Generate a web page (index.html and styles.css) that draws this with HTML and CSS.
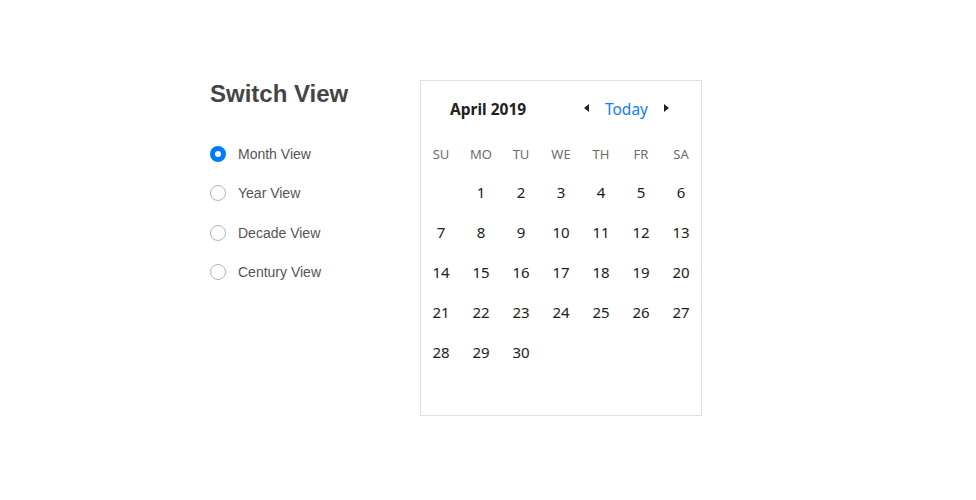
FILE: index.html
```html
<!DOCTYPE html>
<html>
<head>
<meta charset="utf-8">
<link rel="stylesheet" href="styles.css">
</head>
<body>
<div class="page">
  <div class="options">
    <h2 class="title">Switch View</h2>
    <div class="radios">
      <label class="radio-row"><span class="radio checked"></span><span class="radio-label">Month View</span></label>
      <label class="radio-row"><span class="radio"></span><span class="radio-label">Year View</span></label>
      <label class="radio-row"><span class="radio"></span><span class="radio-label">Decade View</span></label>
      <label class="radio-row"><span class="radio"></span><span class="radio-label">Century View</span></label>
    </div>
  </div>
  <div class="calendar">
    <div class="cal-header">
      <span class="cal-title">April 2019</span>
      <div class="cal-nav">
        <span class="arrow arrow-left"></span>
        <span class="today">Today</span>
        <span class="arrow arrow-right"></span>
      </div>
    </div>
    <div class="weekdays">
      <span>SU</span><span>MO</span><span>TU</span><span>WE</span><span>TH</span><span>FR</span><span>SA</span>
    </div>
    <div class="days">
      <span></span><span>1</span><span>2</span><span>3</span><span>4</span><span>5</span><span>6</span>
      <span>7</span><span>8</span><span>9</span><span>10</span><span>11</span><span>12</span><span>13</span>
      <span>14</span><span>15</span><span>16</span><span>17</span><span>18</span><span>19</span><span>20</span>
      <span>21</span><span>22</span><span>23</span><span>24</span><span>25</span><span>26</span><span>27</span>
      <span>28</span><span>29</span><span>30</span><span></span><span></span><span></span><span></span>
      <span></span><span></span><span></span><span></span><span></span><span></span><span></span>
    </div>
  </div>
</div>
</body>
</html>
```

FILE: styles.css
```css
html, body {
  margin: 0;
  padding: 0;
  background: #fff;
}
.page {
  display: flex;
  padding: 80px 0 0 210px;
}
.options {
  width: 210px;
  font-family: "Liberation Sans", Arial, sans-serif;
}
.title {
  margin: 0;
  font-size: 24px;
  line-height: 28px;
  font-weight: bold;
  color: #454545;
}
.radios {
  margin-top: 26px;
  display: flex;
  flex-direction: column;
}
.radio-row {
  display: flex;
  align-items: center;
  height: 39.5px;
}
.radio {
  box-sizing: border-box;
  width: 16px;
  height: 16px;
  border-radius: 50%;
  border: 1px solid #adb5bd;
  background: #fff;
}
.radio.checked {
  border: 5px solid #007bff;
}
.radio-label {
  margin-left: 12px;
  font-size: 14px;
  color: #555;
}
.calendar {
  width: 280px;
  height: 334px;
  border: 1px solid #e0e0e0;
  font-family: "Noto Sans", "Open Sans", sans-serif;
}
.cal-header {
  display: flex;
  align-items: center;
  justify-content: space-between;
  height: 55px;
  padding: 1px 32px 0 29px;
  box-sizing: border-box;
}
.cal-title {
  font-size: 15.5px;
  font-weight: bold;
  color: #212121;
}
.cal-nav {
  display: flex;
  align-items: center;
}
.today {
  font-size: 15.5px;
  color: #0d7bff;
  margin: 0 16px 0 16px;
}
.arrow {
  width: 0;
  height: 0;
  border-top: 4px solid transparent;
  border-bottom: 4px solid transparent;
  margin-top: -2px;
}
.arrow-left {
  border-right: 5px solid #222;
}
.arrow-right {
  border-left: 5px solid #222;
}
.weekdays {
  display: grid;
  grid-template-columns: repeat(7, 40px);
  height: 36px;
  align-items: center;
  font-size: 13px;
  color: #6d6d6d;
}
.weekdays span,
.days span {
  text-align: center;
}
.days {
  display: grid;
  grid-template-columns: repeat(7, 40px);
  grid-auto-rows: 40px;
  align-items: center;
  font-size: 15px;
  color: #212121;
}
```
